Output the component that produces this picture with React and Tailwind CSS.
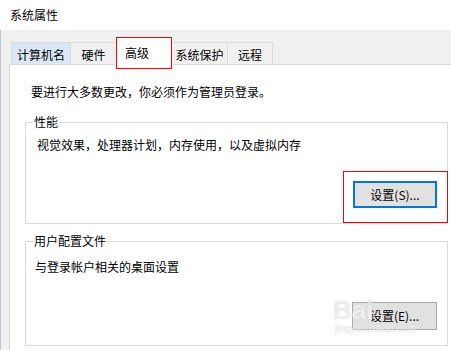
const tabs = [
  { label: '计算机名', w: 'w-[60px]', cls: 'bg-[#dae8f5]' },
  { label: '硬件', w: 'w-[47px]', cls: 'bg-[#f0f0f0]' },
  { label: '高级', w: 'w-[56px]', active: true },
  { label: '系统保护', w: 'w-[57px]', cls: 'bg-[#f0f0f0]' },
  { label: '远程', w: 'w-[46px]', cls: 'bg-[#f0f0f0]' },
]

const GroupBox = ({ title, className, children }) => (
  <div className={`relative border border-[#dcdcdc] w-[423px] ${className}`}>
    <span className="absolute left-[7px] top-[-9px] bg-white px-[1px] leading-[16px]">{title}</span>
    {children}
  </div>
)

export default function App() {
  return (
    <div className="relative w-[451px] h-[350px] overflow-hidden bg-[#f0f0f0] text-[12px] text-black font-['Noto_Sans_CJK_SC','Microsoft_YaHei',sans-serif]">
      {/* title bar */}
      <div className="h-[30px] bg-white flex items-center pl-[10px] leading-[16px]">系统属性</div>

      <div className="border-l border-[#b9c6d3] h-[320px] pl-[8px]">
        {/* tabs */}
        <div className="flex items-end h-[34px] pl-[2px]">
          {tabs.map((t) =>
            t.active ? (
              <div
                key={t.label}
                className={`${t.w} h-[28px] -ml-px -mb-px relative z-10 bg-white border border-b-0 border-[#d9d9d9] pl-[8px] pt-[7px] leading-[16px]`}
              >
                {t.label}
              </div>
            ) : (
              <div
                key={t.label}
                className={`${t.w} h-[22px] -ml-px first:ml-0 ${t.cls} border border-b-0 border-[#d9d9d9] flex items-center justify-center pt-[2px] leading-[16px]`}
              >
                {t.label}
              </div>
            )
          )}
        </div>

        {/* panel */}
        <div className="bg-white border-l border-t border-[#d9d9d9] w-[460px] h-[300px] pl-[15px] pt-[19px]">
          <p className="ml-[6px] leading-[16px]">要进行大多数更改，你必须作为管理员登录。</p>

          <GroupBox title="性能" className="mt-[22px] flex flex-col">
            <p className="pl-[11px] pt-[14px] leading-[16px]">视觉效果，处理器计划，内存使用，以及虚拟内存</p>
            <div className="flex justify-end pr-[10px] mt-[28px] pb-[15px]">
              <button className="w-[84px] h-[27px] bg-[#e1e1e1] border-2 border-[#0078d7] leading-[16px]">
                设置(S)...
              </button>
            </div>
          </GroupBox>

          <GroupBox title="用户配置文件" className="mt-[17px] flex flex-col">
            <p className="pl-[9px] pt-[17px] leading-[16px]">与登录帐户相关的桌面设置</p>
            <div className="flex justify-end pr-[10px] mt-[27px] pb-[15px]">
              <button className="w-[85px] h-[28px] bg-[#e1e1e1] border border-[#adadad] leading-[16px]">
                设置(E)...
              </button>
            </div>
          </GroupBox>
        </div>
      </div>

      {/* red annotation boxes */}
      <div className="absolute left-[116px] top-[37px] w-[56px] h-[32px] border border-[#ff0000] z-20" />
      <div className="absolute left-[343px] top-[171px] w-[105px] h-[52px] border border-[#ff0000] z-20" />

      {/* watermark */}
      <div className="absolute left-[333px] top-[295px] z-20 text-[26px] font-bold leading-[30px] text-white/70 font-['Liberation_Sans',sans-serif] [text-shadow:0_0_1px_#c8c8c8]">
        Bai
      </div>
      <div className="absolute left-[335px] top-[323px] z-20 text-[10px] leading-[12px] text-white/70 font-['Liberation_Sans',sans-serif] [text-shadow:0_0_1px_#c8c8c8]">
        jingyan.baidu.com
      </div>
    </div>
  )
}
